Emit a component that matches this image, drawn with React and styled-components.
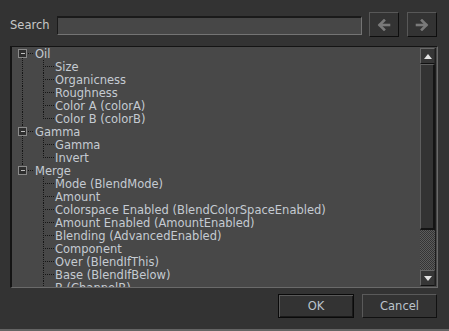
import React from "react";
import styled, { createGlobalStyle } from "styled-components";

const GlobalStyle = createGlobalStyle`
  html, body {
    margin: 0;
    padding: 0;
    background: #333333;
  }
  * {
    box-sizing: border-box;
  }
`;

const tree = [
  {
    name: "Oil",
    children: ["Size", "Organicness", "Roughness", "Color A (colorA)", "Color B (colorB)"],
  },
  { name: "Gamma", children: ["Gamma", "Invert"] },
  {
    name: "Merge",
    children: [
      "Mode (BlendMode)",
      "Amount",
      "Colorspace Enabled (BlendColorSpaceEnabled)",
      "Amount Enabled (AmountEnabled)",
      "Blending (AdvancedEnabled)",
      "Component",
      "Over (BlendIfThis)",
      "Base (BlendIfBelow)",
      "B (ChannelB)",
    ],
  },
];

const DOT = "#151515";

const GroupGuides = ({ first, last }) => (
  <svg width="24" height="13" shapeRendering="crispEdges">
    {!first && <line x1="11.5" y1="0" x2="11.5" y2="2" stroke={DOT} strokeDasharray="1 1" />}
    {!last && <line x1="11.5" y1="11" x2="11.5" y2="13" stroke={DOT} strokeDasharray="1 1" />}
    <rect x="7.5" y="2.5" width="8" height="8" fill="#2e2e2e" stroke="#8a8a8a" />
    <line x1="9.5" y1="6.5" x2="14" y2="6.5" stroke="#bdbdbd" />
    <line x1="17" y1="6.5" x2="23" y2="6.5" stroke={DOT} strokeDasharray="1 1" />
  </svg>
);

const ChildGuides = ({ parentLast, lastChild }) => (
  <svg width="44" height="13" shapeRendering="crispEdges">
    {!parentLast && <line x1="11.5" y1="0" x2="11.5" y2="13" stroke={DOT} strokeDasharray="1 1" />}
    <line x1="32.5" y1="0" x2="32.5" y2={lastChild ? 7 : 13} stroke={DOT} strokeDasharray="1 1" />
    <line x1="34" y1="6.5" x2="43" y2="6.5" stroke={DOT} strokeDasharray="1 1" />
  </svg>
);

const ArrowIcon = ({ dir }) => (
  <svg width="14" height="12" viewBox="0 0 14 12">
    <g
      transform={dir === "right" ? "translate(14 0) scale(-1 1)" : undefined}
      fill="none"
      stroke="#7a7a7a"
      strokeWidth="2.6"
      strokeLinecap="square"
    >
      <path d="M3 6 H12" />
      <path d="M7 1.5 L2.5 6 L7 10.5" />
    </g>
  </svg>
);

const Triangle = ({ down }) => (
  <svg width="8" height="5" viewBox="0 0 8 5">
    <path d={down ? "M0 0 H8 L4 5 Z" : "M0 5 H8 L4 0 Z"} fill="#e2e2e2" />
  </svg>
);

const App = () => {
  return (
    <>
      <GlobalStyle />
      <Dialog>
        <SearchBar>
          <SearchLabel>Search</SearchLabel>
          <SearchInput />
          <NavButton>
            <ArrowIcon dir="left" />
          </NavButton>
          <NavButton>
            <ArrowIcon dir="right" />
          </NavButton>
        </SearchBar>

        <TreePanel>
          <TreeList>
            {tree.map((group, gi) => {
              const last = gi === tree.length - 1;
              return (
                <React.Fragment key={group.name}>
                  <Row>
                    <GroupGuides first={gi === 0} last={last} />
                    <Label>{group.name}</Label>
                  </Row>
                  {group.children.map((child, ci) => (
                    <Row key={child + ci}>
                      <ChildGuides
                        parentLast={last}
                        lastChild={ci === group.children.length - 1}
                      />
                      <Label>{child}</Label>
                    </Row>
                  ))}
                </React.Fragment>
              );
            })}
          </TreeList>
          <ScrollBar>
            <ScrollButton>
              <Triangle />
            </ScrollButton>
            <ScrollThumb />
            <ScrollTrack />
            <ScrollButton>
              <Triangle down />
            </ScrollButton>
          </ScrollBar>
        </TreePanel>

        <Footer>
          <DialogButton $default>OK</DialogButton>
          <DialogButton>Cancel</DialogButton>
        </Footer>
      </Dialog>
    </>
  );
};

const Dialog = styled.div`
  width: 449px;
  height: 331px;
  background: #333333;
  border-bottom: 2px solid #646464;
  display: flex;
  flex-direction: column;
  font-family: "DejaVu Sans", Verdana, sans-serif;
  font-size: 11.5px;
  color: #c5cbd2;
  overflow: hidden;
`;

const SearchBar = styled.div`
  display: flex;
  align-items: center;
  height: 25px;
  margin: 12px 12px 0 10px;
`;

const SearchLabel = styled.span`
  width: 47px;
  color: #c8c8c8;
`;

const SearchInput = styled.div`
  width: 305px;
  height: 19px;
  background: #474747;
  border-top: 2px solid #1a1a1a;
  border-left: 1px solid #1a1a1a;
  border-bottom: 1px solid #747474;
  border-right: 1px solid #747474;
  margin-right: 7px;
  margin-top: 1px;
`;

const NavButton = styled.div`
  width: 30px;
  height: 25px;
  display: flex;
  align-items: center;
  justify-content: center;
  background: #333333;
  border-top: 1px solid #585858;
  border-left: 1px solid #585858;
  border-bottom: 1px solid #0e0e0e;
  border-right: 1px solid #0e0e0e;
  & + & {
    margin-left: 8px;
  }
`;

const TreePanel = styled.div`
  display: flex;
  margin: 9px 11px 0 10px;
  height: 242px;
  background: #484848;
  border-top: 1px solid #141414;
  border-left: 2px solid #141414;
  border-bottom: 1px solid #6a6a6a;
  border-right: 1px solid #6a6a6a;
`;

const TreeList = styled.div`
  flex: 1;
  overflow: hidden;
  margin-left: -1px;
`;

const Row = styled.div`
  display: flex;
  align-items: center;
  height: 13px;
  white-space: nowrap;

  svg {
    flex-shrink: 0;
  }
`;

const Label = styled.span`
  line-height: 13px;
  padding-top: 1px;
`;

const ScrollBar = styled.div`
  width: 16px;
  display: flex;
  flex-direction: column;
  margin: 1px 1px 1px 0;
  border-right: 1px solid #1e1e1e;
`;

const ScrollButton = styled.div`
  height: 16px;
  flex-shrink: 0;
  display: flex;
  align-items: center;
  justify-content: center;
  background: #363636;
  border-top: 1px solid #686868;
  border-left: 1px solid #686868;
  border-bottom: 1px solid #111111;
  border-right: 1px solid #2a2a2a;
`;

const ScrollThumb = styled.div`
  height: 166px;
  flex-shrink: 0;
  background: #333333;
  border-top: 1px solid #5e5e5e;
  border-left: 1px solid #5e5e5e;
  border-bottom: 2px solid #141414;
  border-right: 2px solid #141414;
`;

const ScrollTrack = styled.div`
  flex: 1;
  background: repeating-conic-gradient(#5c5c5c 0 25%, #343434 0 50%) 0 0 / 2px 2px;
`;

const Footer = styled.div`
  display: flex;
  justify-content: flex-end;
  gap: 8px;
  margin: 6px 12px 0 0;
`;

const DialogButton = styled.div`
  width: ${(p) => (p.$default ? "76px" : "75px")};
  height: 24px;
  display: flex;
  align-items: center;
  justify-content: center;
  background: #333333;
  color: #bcc4cc;
  font-size: 11.5px;
  border: 1px solid ${(p) => (p.$default ? "#0a0a0a" : "#111111")};
  border-top-color: ${(p) => (p.$default ? "#0a0a0a" : "#5a5a5a")};
  border-left-color: ${(p) => (p.$default ? "#0a0a0a" : "#5a5a5a")};
  box-shadow: ${(p) => (p.$default ? "inset 1px 1px 0 #5a5a5a, inset -1px -1px 0 #1a1a1a" : "none")};
`;

export default App;
